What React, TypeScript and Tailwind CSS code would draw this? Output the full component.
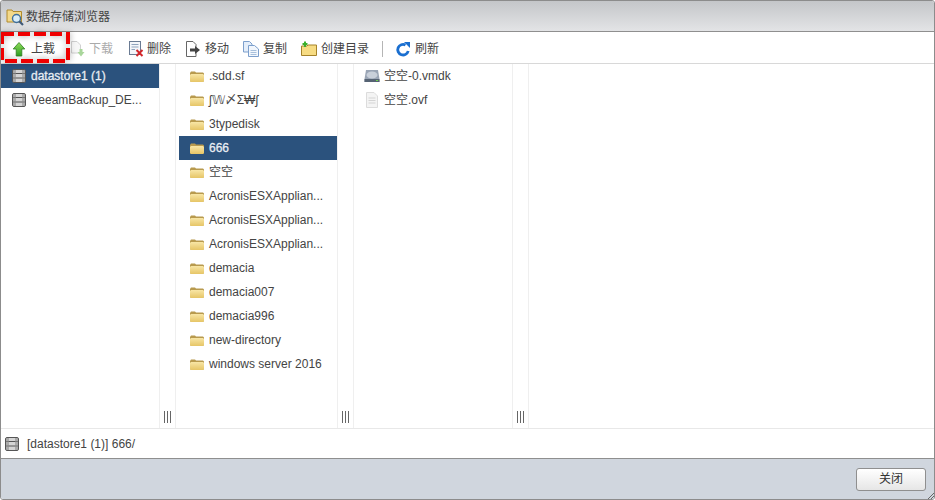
import { type ReactNode } from 'react';

const font = 'font-["Liberation_Sans","Noto_Sans_CJK_SC",sans-serif]';

function Folder() {
    return (
        <svg width="16" height="16" viewBox="0 0 16 16" className="shrink-0">
            <defs>
                <linearGradient id="folder" x1="0" y1="0" x2="0" y2="1">
                    <stop offset="0" stopColor="#f8e6a6" />
                    <stop offset="1" stopColor="#e6c566" />
                </linearGradient>
            </defs>
            <path d="M1 5 L2 3.5 H6 L7 4.5 H14 L15 5.5 V13 L14 14 H2 L1 13 Z" fill="#b89a4e" />
            <path d="M1 7 L2 6 H14 L15 7 V13 L14 14 H2 L1 13 Z" fill="url(#folder)" />
        </svg>
    );
}

function Datastore() {
    return (
        <svg width="14" height="14" viewBox="0 0 14 14" className="shrink-0">
            <rect x="0.5" y="0.5" width="13" height="13" rx="1.5" fill="#d5d5d5" stroke="#555" />
            <path d="M1 4.5 H13 M1 9 H13" stroke="#555" strokeWidth="1" />
            <rect x="1" y="1" width="3" height="12" fill="#8d8d8d" opacity="0.6" />
            <rect x="10" y="1" width="3" height="12" fill="#8d8d8d" opacity="0.6" />
        </svg>
    );
}

function Row({ icon, label, active, className }: { icon: ReactNode; label: string; active?: boolean; className: string }) {
    return (
        <div className={`flex h-6 items-center whitespace-nowrap ${className} ${active ? 'bg-[#2b527d] text-[#e8edf3]' : 'text-[#444]'}`}>
            {icon}
            <span className={active ? '[-webkit-text-stroke:0.3px_#e8edf3]' : ''}>{label}</span>
        </div>
    );
}

function ToolButton({ icon, label, disabled, className = 'gap-1' }: { icon: ReactNode; label: string; disabled?: boolean; className?: string }) {
    return (
        <div className={`flex items-center whitespace-nowrap ${className} ${disabled ? 'text-[#aaa]' : 'text-[#444]'}`}>
            {icon}
            <span>{label}</span>
        </div>
    );
}

function Splitter() {
    return (
        <div className="flex w-[17px] shrink-0 flex-col justify-end border-x border-[#efefef] bg-white pb-[5px]">
            <div className="flex h-3 justify-center gap-[2px]">
                <span className="w-px bg-[#666]" />
                <span className="w-px bg-[#666]" />
                <span className="w-px bg-[#666]" />
            </div>
        </div>
    );
}

const folders = [
    '.sdd.sf',
    'ʃ𝕎〆Σ₩ʃ',
    '3typedisk',
    '666',
    '空空',
    'AcronisESXApplian...',
    'AcronisESXApplian...',
    'AcronisESXApplian...',
    'demacia',
    'demacia007',
    'demacia996',
    'new-directory',
    'windows server 2016',
];

export default function App() {
    return (
        <div className={`relative flex h-[500px] w-[935px] flex-col overflow-hidden rounded-[3px] border border-[#8c8c8c] bg-white text-xs ${font}`}>
            {/* title */}
            <div className="flex h-[31px] shrink-0 items-center gap-[2px] border-b border-[#8f8f8f] bg-gradient-to-b from-[#c4c6c9] to-[#e3e4e6] pt-[2px] pl-[5px] text-[#444]">
                <svg width="18" height="18" viewBox="0 0 18 18">
                    <path d="M1 2 H6 L7 3.5 H15.5 V14 H1 Z" fill="#f3d98a" stroke="#b08a2c" />
                    <circle cx="10.5" cy="10.5" r="4" fill="#d8ecf8" stroke="#3f6f9a" strokeWidth="1.4" />
                    <path d="M13.3 13.3 L17 17" stroke="#3f5a78" strokeWidth="2.2" />
                </svg>
                <span>数据存储浏览器</span>
            </div>

            {/* toolbar */}
            <div className="flex h-8 shrink-0 items-center gap-[14px] border-b border-[#d8d8d8] bg-white pt-[2px] pl-[10px]">
                <ToolButton
                    label="上载"
                    icon={
                        <svg width="16" height="16" viewBox="0 0 16 16">
                            <defs>
                                <linearGradient id="up" x1="0" y1="0" x2="0" y2="1">
                                    <stop offset="0" stopColor="#8fdc5a" />
                                    <stop offset="1" stopColor="#2f9e22" />
                                </linearGradient>
                            </defs>
                            <path d="M8 1.5 L13.8 8 H10.8 V15 H5.2 V8 H2.2 Z" fill="url(#up)" stroke="#2d7f1f" strokeWidth="0.8" />
                        </svg>
                    }
                />
                <ToolButton
                    disabled
                    label="下载"
                    className="ml-px gap-[3px]"
                    icon={
                        <svg width="16" height="16" viewBox="0 0 16 16">
                            <path d="M1.5 0.5 H7 L10.5 4 V12 H1.5 Z" fill="#f7f7f7" stroke="#d0d0d0" />
                            <path d="M9.5 8 V11 H7.5 L11 15.5 L14.5 11 H12.5 V8 Z" fill="#a9d69b" />
                        </svg>
                    }
                />
                <ToolButton
                    label="删除"
                    className="ml-px gap-[3px]"
                    icon={
                        <svg width="16" height="16" viewBox="0 0 16 16">
                            <rect x="1.5" y="0.5" width="11" height="13" fill="#f3f6fa" stroke="#6a7b93" />
                            <path d="M3.5 3.5 H10.5 M3.5 6 H10.5 M3.5 8.5 H7" stroke="#8fa3bd" />
                            <path d="M8.5 9 L14.5 15 M14.5 9 L8.5 15" stroke="#d3262a" strokeWidth="2" />
                        </svg>
                    }
                />
                <ToolButton
                    label="移动"
                    icon={
                        <svg width="16" height="16" viewBox="0 0 16 16">
                            <path d="M1.5 0.5 H8 L11 3.5 V15.5 H1.5 Z" fill="#fff" stroke="#666" />
                            <path d="M5 7.5 H10 V5 L15 9 L10 13 V10.5 H5 Z" fill="#444" />
                        </svg>
                    }
                />
                <ToolButton
                    label="复制"
                    icon={
                        <svg width="16" height="16" viewBox="0 0 16 16">
                            <path d="M0.5 0.5 H6.5 L9 3 V11 H0.5 Z" fill="#e4eefa" stroke="#7c9fcc" />
                            <path d="M5.5 4.5 H11.5 L15.5 8 V15.5 H5.5 Z" fill="#f2f7fd" stroke="#7c9fcc" />
                            <path d="M7.5 9.5 H13.5 M7.5 11.5 H13.5 M7.5 13.5 H13.5" stroke="#a8c0dc" />
                        </svg>
                    }
                />
                <ToolButton
                    label="创建目录"
                    icon={
                        <svg width="16" height="16" viewBox="0 0 16 16">
                            <path d="M0.5 5 H6 L7 4 H15.5 V14.5 H0.5 Z" fill="#f7dc83" stroke="#a5832b" />
                            <path d="M4 0.5 V6 M1.5 3 H6.5" stroke="#3cb02c" strokeWidth="2" />
                        </svg>
                    }
                />
                <span className="-ml-px h-4 w-px bg-[#b5b5b5]" />
                <ToolButton
                    label="刷新"
                    className="-ml-[2px] gap-1"
                    icon={
                        <svg width="16" height="16" viewBox="0 0 16 16" fill="none">
                            <path d="M13.2 10 A5.3 5.3 0 1 1 10.5 4" stroke="#1a6fd0" strokeWidth="2.8" />
                            <path d="M9 1 H15 V7 Z" fill="#1a6fd0" />
                        </svg>
                    }
                />
            </div>

            {/* columns */}
            <div className="flex min-h-0 flex-1 border-b border-[#e8e8e8]">
                <div className="w-[158px] shrink-0">
                    <Row icon={<Datastore />} label="datastore1 (1)" active className="gap-[5px] pl-[11px]" />
                    <Row icon={<Datastore />} label="VeeamBackup_DE..." className="gap-[5px] pl-[11px]" />
                </div>
                <Splitter />
                <div className="w-[161px] shrink-0 pl-[3px]">
                    {folders.map((f, i) => (
                        <Row key={i} icon={<Folder />} label={f} active={f === '666'} className="gap-1 pl-[10px]" />
                    ))}
                </div>
                <Splitter />
                <div className="w-[158px] shrink-0">
                    <Row
                        label="空空-0.vmdk"
                        className="gap-[4px] pl-[10px]"
                        icon={
                            <svg width="16" height="16" viewBox="0 0 16 16" className="shrink-0">
                                <path d="M2 2 H14 L15.5 11 V14 H0.5 V11 Z" fill="#9aa5b5" />
                                <ellipse cx="8" cy="7" rx="5.5" ry="3.5" fill="#c9d0da" />
                                <rect x="0.5" y="11" width="15" height="3" fill="#566373" />
                                <rect x="12" y="12" width="2" height="1" fill="#6fd24a" />
                            </svg>
                        }
                    />
                    <Row
                        label="空空.ovf"
                        className="gap-[4px] pl-[10px]"
                        icon={
                            <svg width="16" height="16" viewBox="0 0 16 16" className="shrink-0">
                                <path d="M2.5 0.5 H10 L13.5 4 V15.5 H2.5 Z" fill="#f4f4f4" stroke="#dcdcdc" />
                                <path d="M4.5 6 H11.5 M4.5 8.5 H11.5 M4.5 11 H11.5" stroke="#d4d4d4" />
                            </svg>
                        }
                    />
                </div>
                <Splitter />
                <div className="flex-1" />
            </div>

            {/* status */}
            <div className="flex h-[30px] shrink-0 items-center gap-2 border-b border-[#8f8f8f] pt-px pl-1 text-[#444]">
                <Datastore />
                <span>[datastore1 (1)] 666/</span>
            </div>

            {/* footer */}
            <div className="relative flex h-10 shrink-0 items-center justify-end bg-[#d0d6de] pr-2">
                <button className="h-[23px] w-[70px] rounded-[3px] border border-[#8f8f8f] bg-gradient-to-b from-white to-[#e6e6e6] text-[#333]">
                    关闭
                </button>
                <svg width="7" height="7" viewBox="0 0 7 7" className="absolute right-0 bottom-0">
                    <path d="M1 7 L7 1 M4 7 L7 4" stroke="#666" strokeWidth="1" />
                </svg>
            </div>

            {/* red highlight drawn on the screenshot */}
            <svg width="74" height="36" viewBox="0 0 74 36" className="absolute top-[30px] -left-px drop-shadow-[0_0_3px_rgba(0,0,0,0.35)]" fill="none">
                <rect x="2" y="3" width="66" height="27" stroke="#f00000" strokeWidth="4" strokeDasharray="12 4" />
            </svg>
        </div>
    );
}
